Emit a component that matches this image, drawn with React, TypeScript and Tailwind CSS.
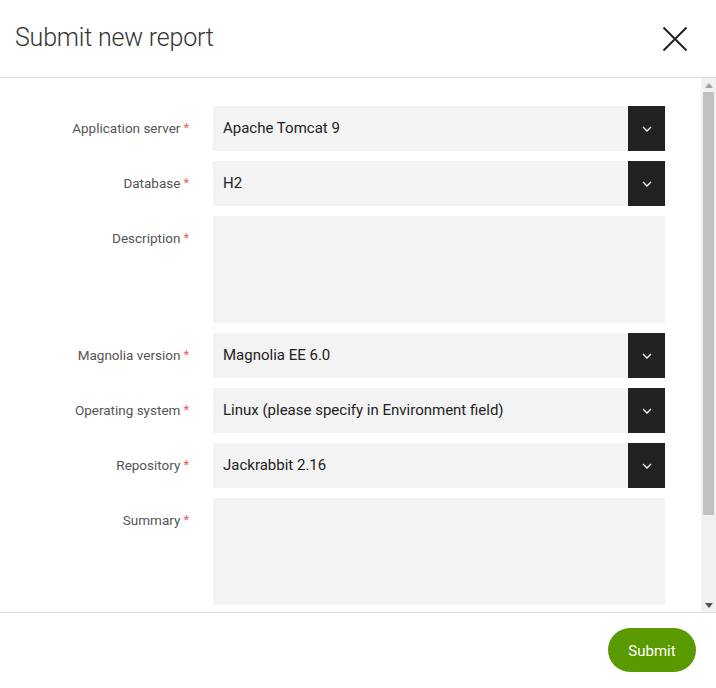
const fields = [
  { label: "Application server", value: "Apache Tomcat 9", type: "select" },
  { label: "Database", value: "H2", type: "select" },
  { label: "Description", value: "", type: "text" },
  { label: "Magnolia version", value: "Magnolia EE 6.0", type: "select" },
  { label: "Operating system", value: "Linux (please specify in Environment field)", type: "select" },
  { label: "Repository", value: "Jackrabbit 2.16", type: "select" },
  { label: "Summary", value: "", type: "text" },
];

const Chevron = () => (
  <svg width="10" height="6" viewBox="0 0 10 6" fill="none">
    <path d="M1 1l4 4 4-4" stroke="#fff" strokeWidth="1.3" />
  </svg>
);

// fake classic scrollbar, the headless browser hides the real one
const Scrollbar = () => (
  <div className="w-[15px] shrink-0 bg-[#f1f1f1] flex flex-col items-center">
    <div className="h-[14px] flex items-center justify-center">
      <svg width="8" height="5" viewBox="0 0 8 5"><path d="M0 5L4 0L8 5Z" fill="#a3a3a3" /></svg>
    </div>
    <div className="w-[11px] h-[423px] bg-[#c1c1c1]" />
    <div className="flex-1" />
    <div className="h-[14px] flex items-center justify-center">
      <svg width="8" height="5" viewBox="0 0 8 5"><path d="M0 0L4 5L8 0Z" fill="#505050" /></svg>
    </div>
  </div>
);

const App = () => {
  return (
    <div className="w-[716px] h-[688px] bg-white flex flex-col font-['Roboto',sans-serif] overflow-hidden">
      <div className="h-[78px] shrink-0 border-b border-[#dcdcdc] flex items-center justify-between pl-[15px] pr-[28px]">
        <h1 className="text-[25px] font-light text-[#333] tracking-[-0.2px] -mt-[2px]">Submit new report</h1>
        <button className="w-[26px] h-[26px] flex items-center justify-center">
          <svg width="26" height="26" viewBox="0 0 26 26" fill="none">
            <path d="M1.5 1.5l23 23M24.5 1.5l-23 23" stroke="#222" strokeWidth="2" />
          </svg>
        </button>
      </div>

      <div className="flex-1 flex min-h-0">
        <div className="flex-1 overflow-hidden pt-[28px]">
          <div className="flex flex-col gap-[10px]">
            {fields.map((f) => (
              <div key={f.label} className="flex">
                <div className="w-[190px] shrink-0 flex justify-end pt-[12px] pr-[1px]">
                  <span className="text-[13.5px] text-[#555]">{f.label}</span>
                  <span className="text-[13px] text-[#f05a5a] ml-[3px]">*</span>
                </div>
                <div className="ml-[23px] w-[452px]">
                  {f.type === "select" ? (
                    <div className="h-[45px] bg-[#f3f3f3] flex items-center">
                      <span className="flex-1 pl-[10px] text-[15px] text-[#222]">{f.value}</span>
                      <div className="w-[37px] h-full bg-[#222] flex items-center justify-center">
                        <Chevron />
                      </div>
                    </div>
                  ) : (
                    <div className="h-[107px] bg-[#f3f3f3]" />
                  )}
                </div>
              </div>
            ))}
          </div>
        </div>
        <Scrollbar />
      </div>

      <div className="h-[76px] shrink-0 border-t border-[#dcdcdc] flex justify-end items-start pt-[15px] pr-[20px]">
        <button className="w-[88px] h-[44px] rounded-full bg-[#5a9a00] text-white text-[15px] pt-[3px]">Submit</button>
      </div>
    </div>
  );
};

export default App;
